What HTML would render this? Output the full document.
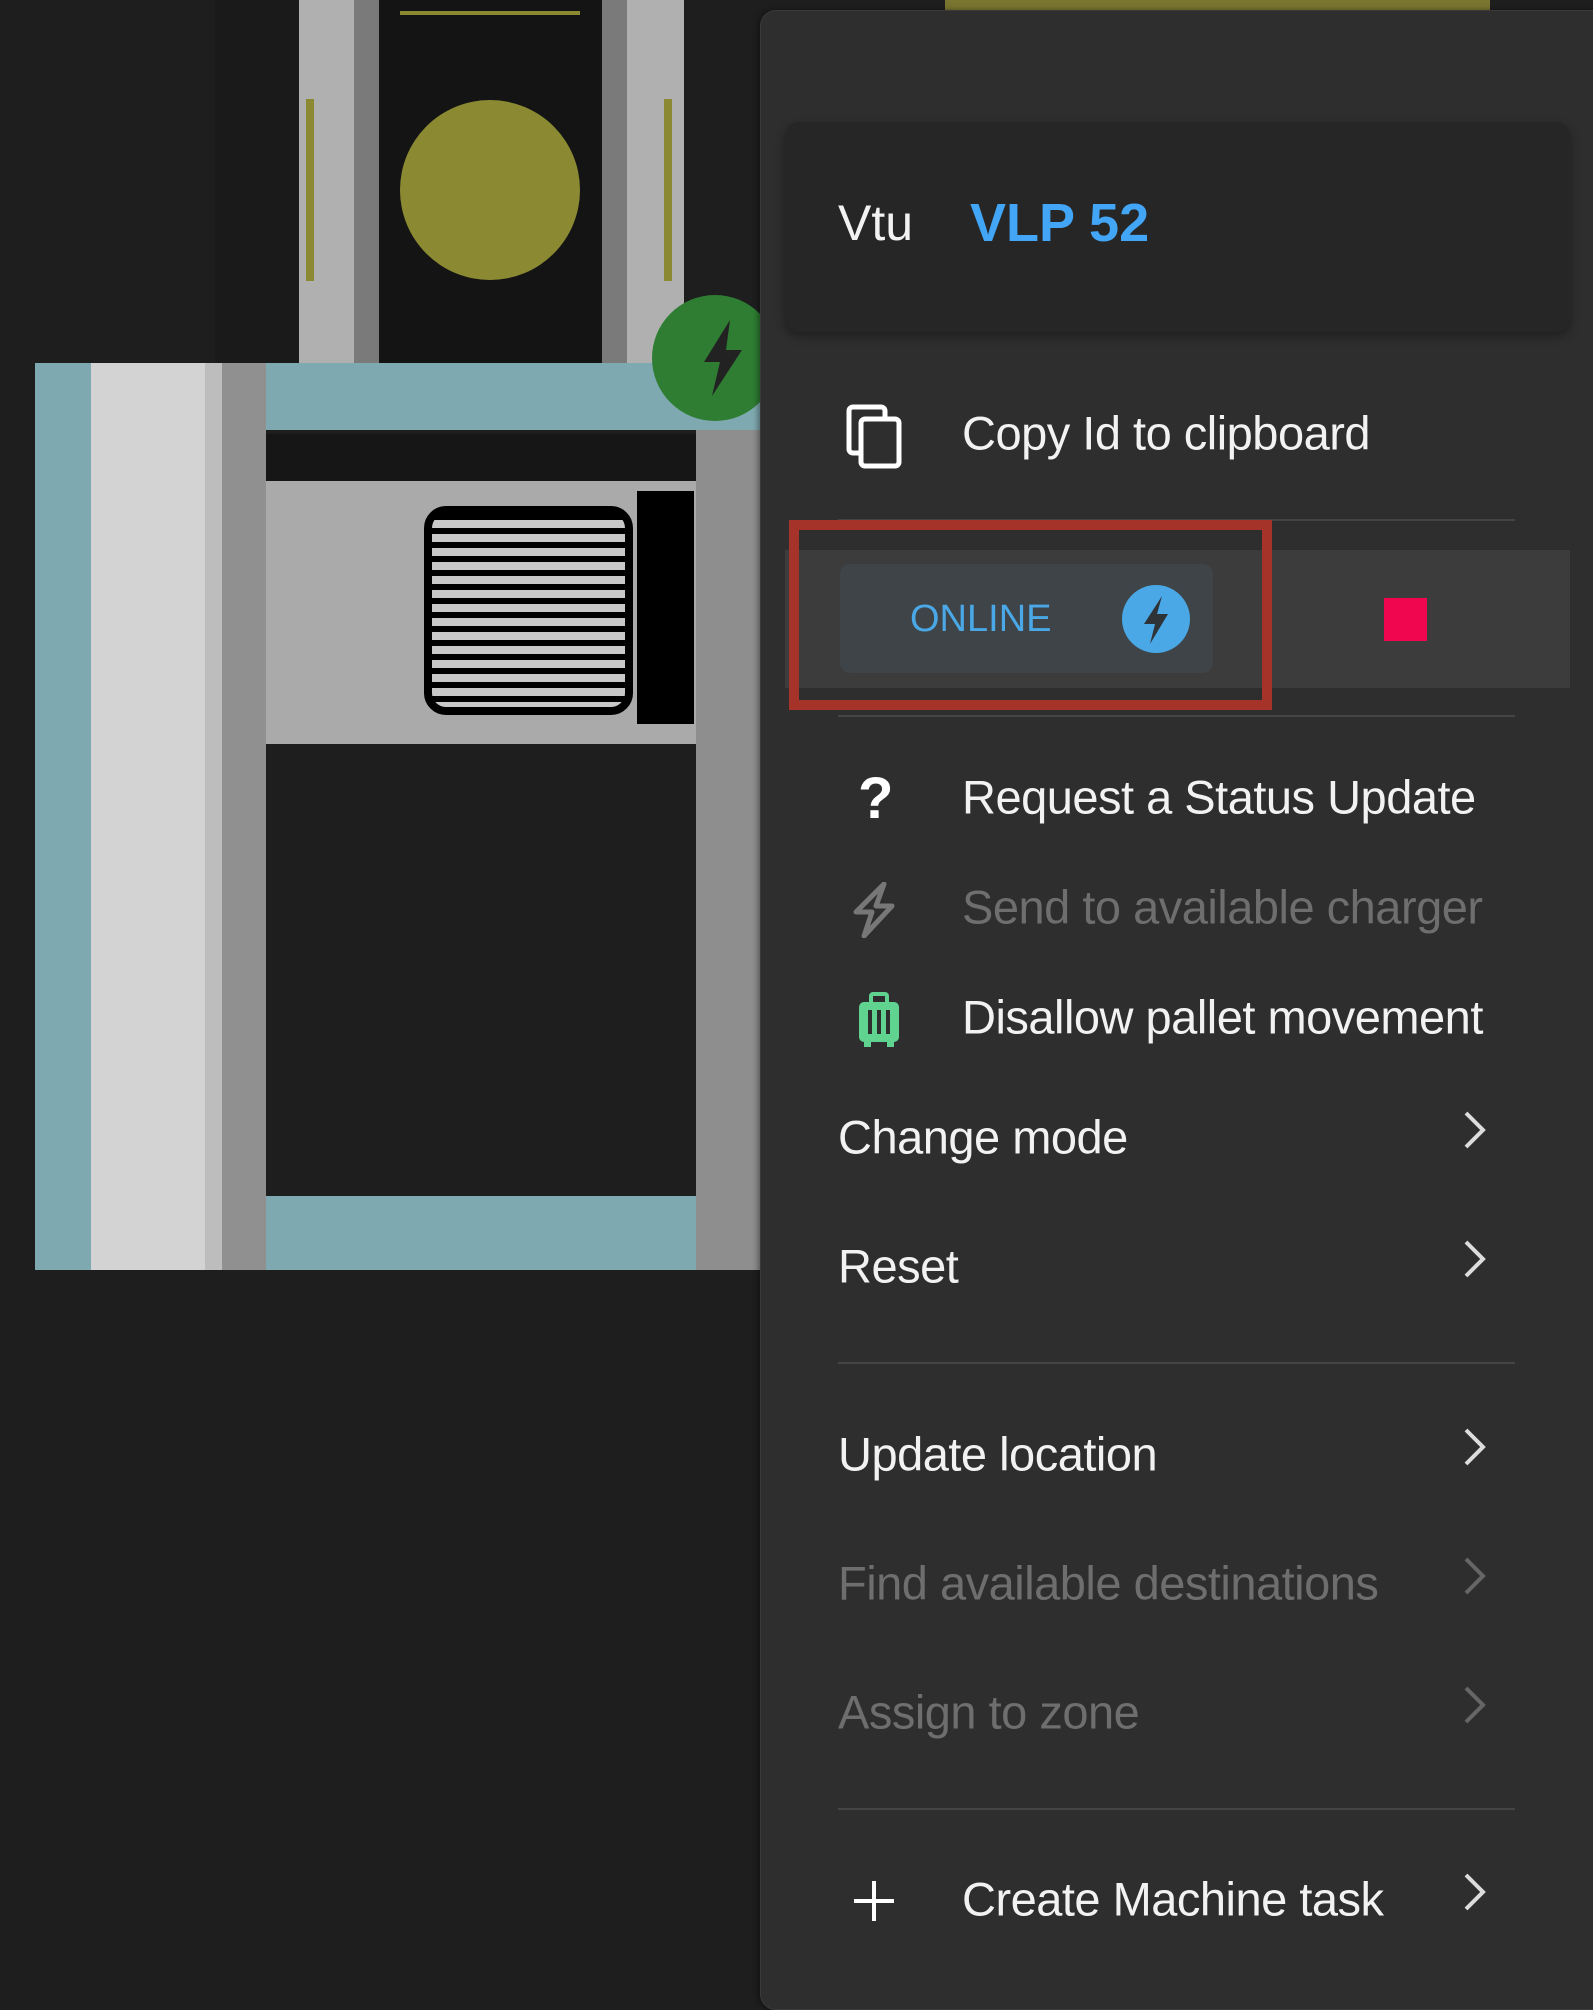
<!DOCTYPE html>
<html><head><meta charset="utf-8"><style>
*{margin:0;padding:0;box-sizing:border-box}
body{width:1593px;height:1986px;background:#1e1e1e;position:relative;overflow:hidden;font-family:"Liberation Sans",sans-serif}
.a{position:absolute}
.t{position:absolute;left:838px;font-size:47px;color:#f2f2f2;letter-spacing:-0.5px;line-height:1;transform:translateY(-52%)}
.g{color:#6e6e6e}
.ic{position:absolute;left:846px}
.chev{position:absolute;left:1463px;width:24px;height:40px}
.div{position:absolute;left:838px;width:677px;height:2px;background:#444}
</style></head><body>
<div class="a" style="left:215px;top:0;width:85px;height:363px;background:#1a1a1a"></div>
<div class="a" style="left:299px;top:0;width:385px;height:363px;background:#b0b0b0"></div>
<div class="a" style="left:354px;top:0;width:25px;height:363px;background:#7a7a7a"></div>
<div class="a" style="left:602px;top:0;width:25px;height:363px;background:#7a7a7a"></div>
<div class="a" style="left:379px;top:0;width:223px;height:363px;background:#141414"></div>
<div class="a" style="left:400px;top:11px;width:180px;height:4px;background:#8b8a33"></div>
<div class="a" style="left:400px;top:100px;width:180px;height:180px;border-radius:50%;background:#8b8a33"></div>
<div class="a" style="left:306px;top:99px;width:8px;height:182px;background:#8b8a33"></div>
<div class="a" style="left:664px;top:99px;width:8px;height:182px;background:#8b8a33"></div>
<div class="a" style="left:945px;top:0;width:545px;height:10px;background:#7a7530"></div>
<div class="a" style="left:35px;top:363px;width:725px;height:907px;background:#7fa9b0"></div>
<div class="a" style="left:91px;top:363px;width:131px;height:907px;background:#d3d3d3"></div>
<div class="a" style="left:205px;top:363px;width:17px;height:907px;background:#bdbdbd"></div>
<div class="a" style="left:222px;top:363px;width:44px;height:907px;background:#909090"></div>
<div class="a" style="left:696px;top:430px;width:64px;height:840px;background:#8e8e8e"></div>
<div class="a" style="left:266px;top:430px;width:430px;height:766px;background:#1e1e1e"></div>
<div class="a" style="left:266px;top:434px;width:430px;height:47px;background:#161616"></div>
<div class="a" style="left:266px;top:481px;width:430px;height:263px;background:#aaaaaa"></div>
<div class="a" style="left:424px;top:506px;width:209px;height:209px;border-radius:22px;background:repeating-linear-gradient(#000 0 6px,#c8c8c8 6px 14px);border:8px solid #000"></div>
<div class="a" style="left:637px;top:491px;width:57px;height:233px;background:#000"></div>
<div class="a" style="left:652px;top:295px;width:126px;height:126px;border-radius:50%;background:#2e7d32"></div>
<svg class="a" style="left:690px;top:318px" width="60" height="80" viewBox="0 0 60 80"><path d="M40 2 L14 44 L30 44 L22 78 L52 32 L36 32 Z" fill="#222"/></svg>
<div class="a" style="left:760px;top:10px;width:860px;height:2000px;background:#2e2e2e;border-radius:16px;border:1px solid #3a3a3a;box-shadow:-2px 0 6px rgba(0,0,0,.4)"></div>
<div class="a" style="left:785px;top:122px;width:785px;height:210px;background:#262626;border-radius:14px;box-shadow:0 4px 10px rgba(0,0,0,.35)"></div>
<div class="a" style="left:838px;top:224px;font-size:50px;color:#f2f2f2;transform:translateY(-52%);line-height:1">Vtu</div>
<div class="a" style="left:970px;top:224px;font-size:54px;font-weight:bold;color:#42a5f5;transform:translateY(-52%);line-height:1">VLP 52</div>

<svg class="ic" style="top:404px" width="58" height="66" viewBox="0 0 58 66"><rect x="3" y="3" width="36" height="46" rx="4" fill="none" stroke="#fff" stroke-width="5"/><rect x="15" y="15" width="38" height="47" rx="4" fill="#2e2e2e" stroke="#fff" stroke-width="5"/></svg>
<div class="t" style="left:962px;top:434px">Copy Id to clipboard</div>
<div class="div" style="top:519px"></div>

<div class="a" style="left:785px;top:550px;width:785px;height:138px;background:#3c3c3c"></div>
<div class="a" style="left:840px;top:564px;width:373px;height:109px;background:#3f4449;border-radius:10px"></div>
<div class="a" style="left:910px;top:619px;font-size:38px;color:#4aa8e6;transform:translateY(-50%);line-height:1">ONLINE</div>
<div class="a" style="left:1122px;top:585px;width:68px;height:68px;border-radius:50%;background:#4aa8e6"></div>
<svg class="a" style="left:1138px;top:594px" width="36" height="52" viewBox="0 0 36 52"><path d="M24 2 L6 30 L17 30 L12 50 L30 20 L19 20 Z" fill="#2e3338"/></svg>
<div class="a" style="left:1384px;top:598px;width:43px;height:43px;background:#f0064f"></div>
<div class="a" style="left:789px;top:520px;width:483px;height:190px;border:10px solid #a5332a"></div>
<div class="div" style="top:715px"></div>

<div class="a" style="left:858px;top:770px;font-size:58px;font-weight:bold;color:#fff;line-height:1">?</div>
<div class="t" style="left:962px;top:798px">Request a Status Update</div>
<svg class="ic" style="top:882px" width="56" height="56" viewBox="0 0 56 56"><path d="M38 2 L10 30 L26 30 L18 54 L46 24 L30 24 Z" fill="none" stroke="#777" stroke-width="5" stroke-linejoin="round"/></svg>
<div class="t g" style="left:962px;top:908px">Send to available charger</div>
<svg class="ic" style="left:857px;top:992px" width="44" height="56" viewBox="0 0 44 56"><rect x="14" y="2" width="16" height="10" rx="2" fill="none" stroke="#5fd38f" stroke-width="4"/><rect x="2" y="10" width="40" height="40" rx="5" fill="#5fd38f"/><rect x="11" y="18" width="4" height="24" fill="#2e2e2e"/><rect x="20" y="18" width="4" height="24" fill="#2e2e2e"/><rect x="29" y="18" width="4" height="24" fill="#2e2e2e"/><rect x="7" y="50" width="7" height="5" fill="#5fd38f"/><rect x="30" y="50" width="7" height="5" fill="#5fd38f"/></svg>
<div class="t" style="left:962px;top:1018px">Disallow pallet movement</div>

<div class="t" style="top:1138px">Change mode</div>
<svg class="chev" style="top:1110px" viewBox="0 0 24 40"><path d="M3 3 L20 20 L3 37" fill="none" stroke="#ddd" stroke-width="4"/></svg>
<div class="t" style="top:1267px">Reset</div>
<svg class="chev" style="top:1239px" viewBox="0 0 24 40"><path d="M3 3 L20 20 L3 37" fill="none" stroke="#ddd" stroke-width="4"/></svg>
<div class="div" style="top:1362px"></div>
<div class="t" style="top:1455px">Update location</div>
<svg class="chev" style="top:1427px" viewBox="0 0 24 40"><path d="M3 3 L20 20 L3 37" fill="none" stroke="#ddd" stroke-width="4"/></svg>
<div class="t g" style="top:1584px">Find available destinations</div>
<svg class="chev" style="top:1556px" viewBox="0 0 24 40"><path d="M3 3 L20 20 L3 37" fill="none" stroke="#666" stroke-width="4"/></svg>
<div class="t g" style="top:1713px">Assign to zone</div>
<svg class="chev" style="top:1685px" viewBox="0 0 24 40"><path d="M3 3 L20 20 L3 37" fill="none" stroke="#666" stroke-width="4"/></svg>
<div class="div" style="top:1808px"></div>
<svg class="ic" style="left:852px;top:1879px" width="44" height="44" viewBox="0 0 44 44"><path d="M22 2 V42 M2 22 H42" stroke="#fff" stroke-width="4"/></svg>
<div class="t" style="left:962px;top:1900px">Create Machine task</div>
<svg class="chev" style="top:1872px" viewBox="0 0 24 40"><path d="M3 3 L20 20 L3 37" fill="none" stroke="#ddd" stroke-width="4"/></svg>
</body></html>
